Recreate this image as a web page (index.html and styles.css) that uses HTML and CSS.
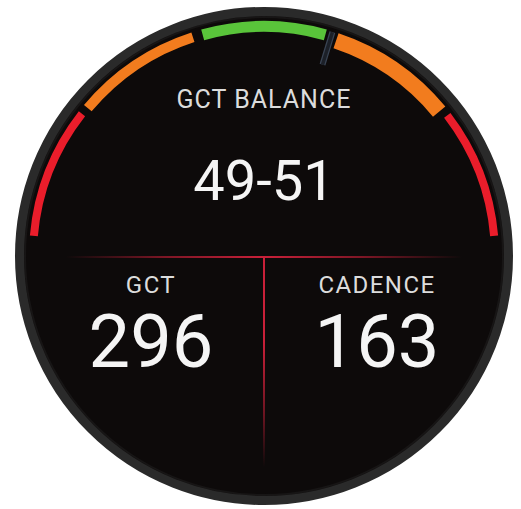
FILE: index.html
```html
<!DOCTYPE html>
<html lang="en">
<head>
<meta charset="utf-8">
<title>GCT Balance</title>
<link rel="stylesheet" href="styles.css">
</head>
<body>
<div class="watch">
  <svg class="gauge" viewBox="0 0 480 480" width="480" height="480" aria-hidden="true">
    <path d="M9.88 219.87 A231 231 0 0 1 57.97 97.78" stroke="#ea1d2b" stroke-width="8" fill="none"/>
    <path d="M63.81 92.16 A230 230 0 0 1 168.93 21.26" stroke="#f27c1e" stroke-width="10" fill="none"/>
    <path d="M178.67 18.85 A229.5 229.5 0 0 1 301.33 18.85" stroke="#59c43a" stroke-width="11" fill="none"/>
    <path d="M312.03 24.73 A227 227 0 0 1 415.16 95.61" stroke="#f27c1e" stroke-width="16" fill="none"/>
    <path d="M423.26 99.38 A231 231 0 0 1 470.12 219.87" stroke="#ea1d2b" stroke-width="8" fill="none"/>
    <line x1="298.5" y1="48.7" x2="308.4" y2="16.2" stroke="#3a4454" stroke-width="6"/>
    <line x1="298.5" y1="48.7" x2="308.4" y2="16.2" stroke="#1c2028" stroke-width="3.5"/>
  </svg>
  <div class="top">
    <div class="top-label">GCT BALANCE</div>
    <div class="top-value">49-51</div>
  </div>
  <div class="hline"></div>
  <div class="split">
    <div class="field">
      <div class="field-label">GCT</div>
      <div class="field-value">296</div>
    </div>
    <div class="vline"></div>
    <div class="field">
      <div class="field-label">CADENCE</div>
      <div class="field-value">163</div>
    </div>
  </div>
</div>
</body>
</html>
```
FILE: styles.css
```css
html, body {
  margin: 0;
  padding: 0;
  background: #ffffff;
}

body {
  font-family: Roboto, "Liberation Sans", sans-serif;
  width: 521px;
  height: 509px;
  overflow: hidden;
}

.watch {
  position: relative;
  box-sizing: border-box;
  width: 498px;
  height: 498px;
  margin: 7px 0 0 15px;
  border-radius: 50%;
  border: 9px solid #2a2a2a;
  background: #0d0a0a;
  box-shadow: inset 0 0 0 2px #171515;
  overflow: hidden;
}

.gauge {
  position: absolute;
  left: 0;
  top: 0;
}

.top {
  display: flex;
  flex-direction: column;
  align-items: center;
  padding-top: 71px;
}

.top-label {
  font-size: 25px;
  line-height: 25px;
  letter-spacing: 1px;
  color: #dcdcdc;
}

.top-value {
  margin-top: 41px;
  font-size: 56px;
  line-height: 56px;
  color: #f5f5f5;
}

.hline {
  width: 396px;
  height: 2px;
  margin: 47px auto 0;
  background: linear-gradient(to right, rgba(200, 30, 55, 0), rgba(200, 30, 55, 0.6) 25%, #c92039 50%, rgba(200, 30, 55, 0.6) 75%, rgba(200, 30, 55, 0));
}

.split {
  display: grid;
  grid-template-columns: 224px 2px 224px;
  justify-content: center;
  align-items: start;
}

.field {
  display: flex;
  flex-direction: column;
  align-items: center;
  padding-top: 15px;
}

.field-label {
  font-size: 24px;
  line-height: 24px;
  letter-spacing: 0.06em;
  color: #dcdcdc;
}

.field-value {
  margin-top: 8px;
  font-size: 74px;
  line-height: 74px;
  color: #f5f5f5;
}

.vline {
  width: 2px;
  height: 209px;
  background: linear-gradient(to bottom, #c92039, #c92039 40%, rgba(200, 30, 55, 0.5) 75%, rgba(200, 30, 55, 0));
}
```
